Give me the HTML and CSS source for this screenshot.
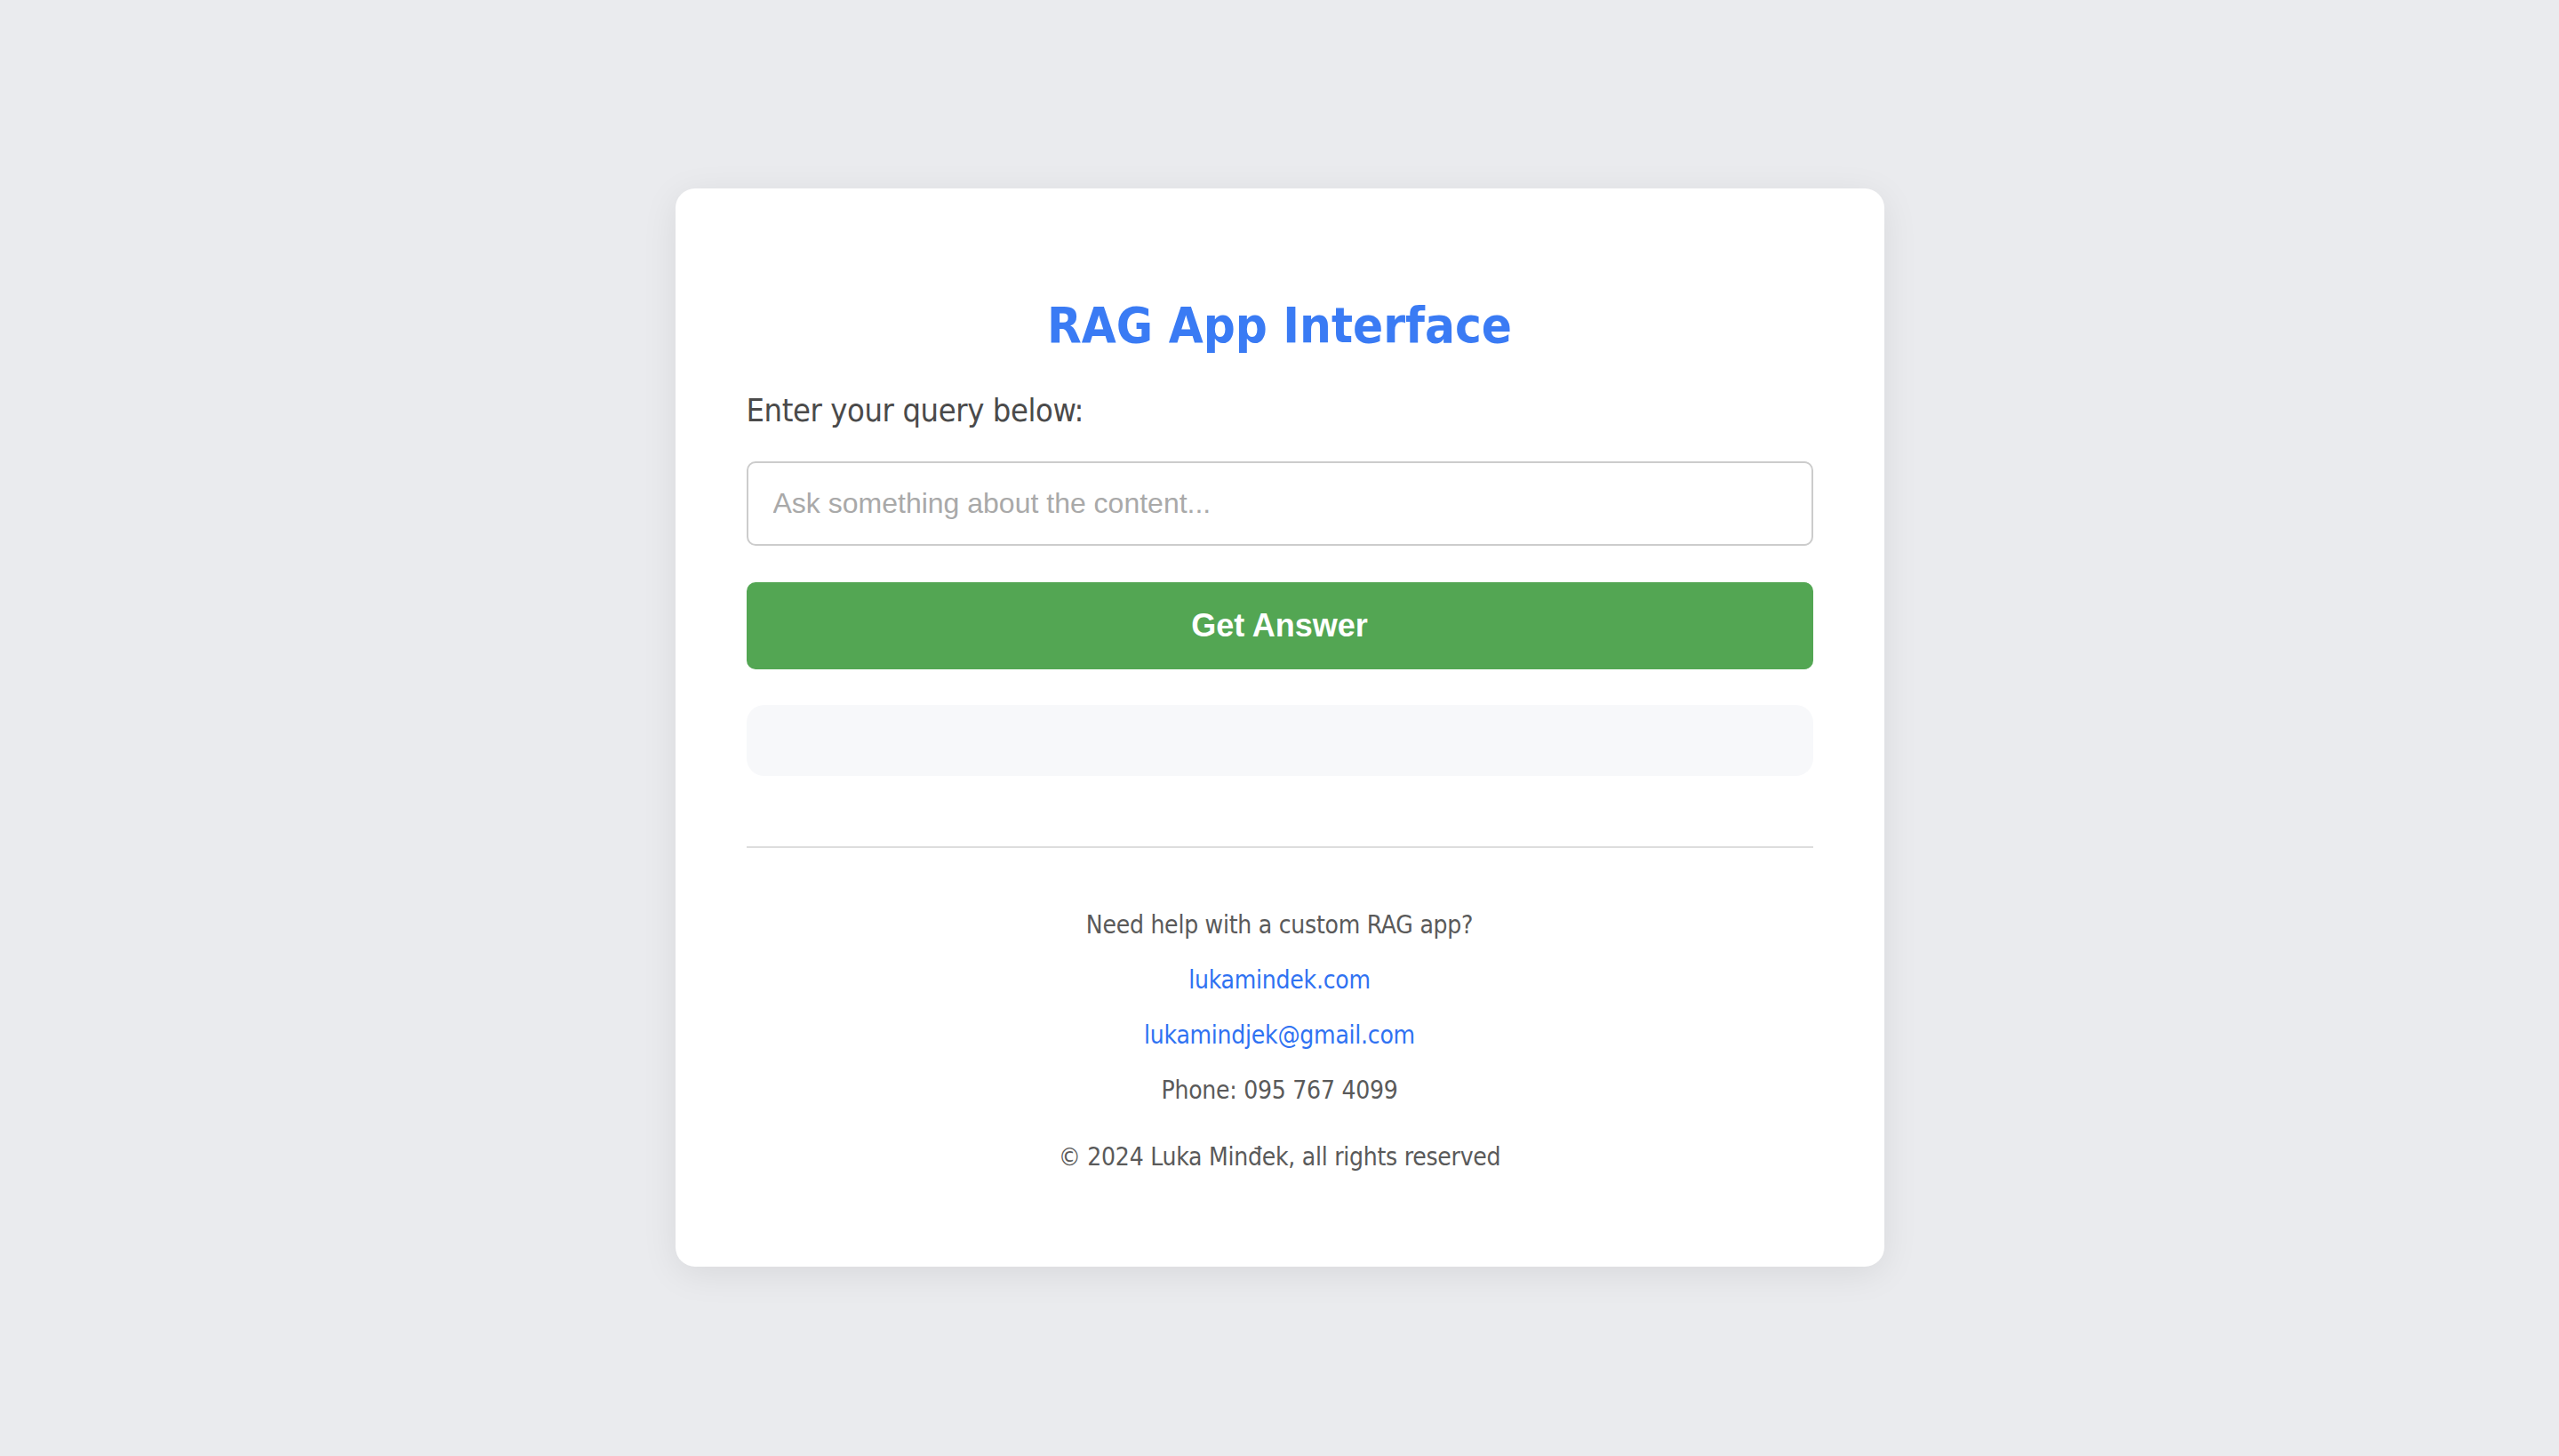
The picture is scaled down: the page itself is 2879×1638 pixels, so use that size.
FILE: index.html
```html
<!DOCTYPE html>
<html lang="en">
<head>
<meta charset="utf-8">
<title>RAG App Interface</title>
<link rel="stylesheet" href="styles.css">
</head>
<body>
<main class="card">
  <h1 class="title">RAG App Interface</h1>
  <label class="label" for="query">Enter your query below:</label>
  <input class="query" id="query" type="text" placeholder="Ask something about the content...">
  <button class="submit" type="button">Get Answer</button>
  <div class="answer"></div>
  <hr class="divider">
  <footer class="footer">
    <p class="line">Need help with a custom RAG app?</p>
    <p class="line"><a class="link" href="#">lukamindek.com</a></p>
    <p class="line"><a class="link" href="#">lukamindjek@gmail.com</a></p>
    <p class="line">Phone: 095 767 4099</p>
    <p class="line copy">© 2024 Luka Minđek, all rights reserved</p>
  </footer>
</main>
</body>
</html>
```
FILE: styles.css
```css
* { box-sizing: border-box; }
html, body { margin: 0; height: 100%; }
body {
  background: #eaebee;
  font-family: "DejaVu Sans Condensed", "DejaVu Sans", sans-serif;
  display: flex;
  justify-content: center;
  align-items: flex-start;
  padding-top: 212px;
}
.card {
  width: 1360px;
  background: #ffffff;
  border-radius: 22px;
  box-shadow: 0 8px 40px rgba(0, 0, 0, 0.08);
  padding: 121px 80px 80px;
  display: flex;
  flex-direction: column;
}
.title {
  margin: 0;
  font-size: 56px;
  font-weight: bold;
  color: #3a7bf4;
  text-align: center;
  line-height: normal;
}
.label {
  margin-top: 43px;
  font-size: 36px;
  color: #4a4a4a;
  letter-spacing: -0.4px;
  line-height: normal;
}
.query {
  margin-top: 37px;
  height: 95px;
  width: 100%;
  border: 2px solid #cccccc;
  border-radius: 10px;
  padding: 0 28px;
  font-family: "Liberation Sans", Arial, sans-serif;
  font-size: 32px;
  color: #333;
  background: #fff;
  outline: none;
}
.query::placeholder { color: #a9a9a9; }
.submit {
  margin-top: 41px;
  height: 98px;
  width: 100%;
  border: none;
  border-radius: 10px;
  background: #53a653;
  color: #ffffff;
  font-family: "Liberation Sans", Arial, sans-serif;
  font-weight: bold;
  font-size: 36px;
  cursor: pointer;
}
.answer {
  margin-top: 40px;
  height: 80px;
  background: #f7f8fa;
  border-radius: 20px;
}
.divider {
  margin: 79px 0 0;
  border: none;
  border-top: 2px solid #dddddd;
  height: 0;
}
.footer {
  margin-top: 70px;
  display: flex;
  flex-direction: column;
  align-items: center;
  gap: 28px;
  font-size: 28px;
  color: #5a5a5a;
  letter-spacing: -0.25px;
}
.line { margin: 0; line-height: 34px; }
.copy { margin-top: 13px; margin-bottom: 26px; }
.link { color: #2f72f2; text-decoration: none; }
```
